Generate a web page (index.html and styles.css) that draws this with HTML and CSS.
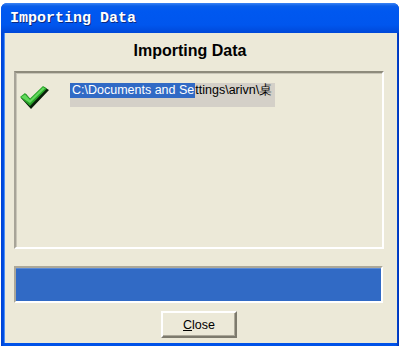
FILE: index.html
```html
<!DOCTYPE html>
<html>
<head>
<meta charset="utf-8">
<link rel="stylesheet" href="styles.css">
</head>
<body>
<div class="window">
  <div class="titlebar"><span class="title">Importing Data</span></div>
  <div class="content">
    <div class="heading">Importing Data</div>
    <div class="panel">
      <div class="row">
        <svg class="check" width="30" height="25" viewBox="0 0 30 25">
          <path d="M1 13 L6 9 L11 15 L24 2 L29 5 L11 24 Z" fill="#0a1f0a"/>
          <path d="M0 12 L5 8 L10 13.5 L23 1 L27 3.5 L10 21 Z" fill="#27a327"/>
          <path d="M1 12 L5 9.5 L10 15 L23 2.2 L25 3.4 L10 18 Z" fill="#62d85c"/>
        </svg>
        <div class="pathbox"><span class="sel">C:\Documents and Se</span>ttings\arivn\桌</div>
      </div>
    </div>
    <div class="progress"><div class="fill"></div></div>
    <div class="btnrow"><button class="btn"><u>C</u>lose</button></div>
  </div>
</div>
</body>
</html>
```

FILE: styles.css
```css
html, body {
  margin: 0;
  padding: 0;
  background: #ffffff;
}
body {
  padding: 3px 0 0 1px;
}
.window {
  width: 398px;
  height: 343px;
  box-sizing: border-box;
  border-radius: 6px 6px 0 0;
  display: flex;
  flex-direction: column;
  padding: 0 2px 3px 4px;
  background: linear-gradient(90deg, #0040d0, #0052e8 3px, #0052e8 calc(100% - 3px), #0030b0);
}
.titlebar {
  height: 30px;
  margin: 0 -2px 0 -4px;
  border-radius: 6px 6px 0 0;
  background: linear-gradient(#3b84f5 0px, #0a5ee9 3px, #0058f0 8px, #0056ee 22px, #0048d8 30px);
  display: flex;
  align-items: center;
  padding-left: 9px;
}
.title {
  font-family: "Liberation Mono", monospace;
  font-weight: bold;
  font-size: 15px;
  color: #ffffff;
  text-shadow: 1px 1px 0 #0a2a80;
}
.content {
  flex: 1;
  background: #ece9d8;
  padding: 8px 0 0 9px;
  display: flex;
  flex-direction: column;
  font-family: "Liberation Sans", Arial, sans-serif;
  border-left: 1px solid #4d8ef5;
  margin-left: -1px;
}
.heading {
  height: 20px;
  line-height: 20px;
  width: 352px;
  text-align: center;
  font-weight: bold;
  font-size: 16px;
  color: #000;
}
.panel {
  margin-top: 10px;
  width: 370px;
  height: 178px;
  box-sizing: border-box;
  border-top: 2px solid #8e8b7c;
  border-left: 2px solid #a7a498;
  border-right: 2px solid #ffffff;
  border-bottom: 2px solid #ffffff;
  box-shadow: inset 1px 1px 0 #c9c6b8;
  padding: 10px 0 0 4px;
}
.row {
  display: flex;
  align-items: flex-start;
}
.check {
  margin-top: 2px;
  margin-right: 20px;
  flex: none;
}
.pathbox {
  width: 205px;
  height: 24px;
  background: #d4d0c8;
  font-size: 12.5px;
  line-height: 15px;
  white-space: nowrap;
  color: #000;
}
.sel {
  background: #316ac5;
  color: #ffffff;
  display: inline-block;
  padding-left: 2px;
  padding-right: 1px;
}
.progress {
  margin-top: 17px;
  width: 369px;
  height: 37px;
  box-sizing: border-box;
  border-top: 2px solid #aca899;
  border-left: 2px solid #aca899;
  border-right: 2px solid #ffffff;
  border-bottom: 2px solid #ffffff;
}
.fill {
  width: 100%;
  height: 100%;
  background: #316ac5;
  box-shadow: inset 0 1px 0 #5a8ad6;
}
.btnrow {
  margin-top: 8px;
  width: 376px;
  display: flex;
  justify-content: center;
}
.btn {
  width: 76px;
  height: 27px;
  box-sizing: border-box;
  margin-right: 6px;
  background: #ece9d8;
  border-top: 2px solid #ffffff;
  border-left: 2px solid #ffffff;
  border-right: 2px solid #7d7a6d;
  border-bottom: 2px solid #7d7a6d;
  box-shadow: inset -1px -1px 0 #aca899;
  font-family: "Liberation Sans", Arial, sans-serif;
  font-size: 12.5px;
  color: #000;
  padding: 0;
}
```
